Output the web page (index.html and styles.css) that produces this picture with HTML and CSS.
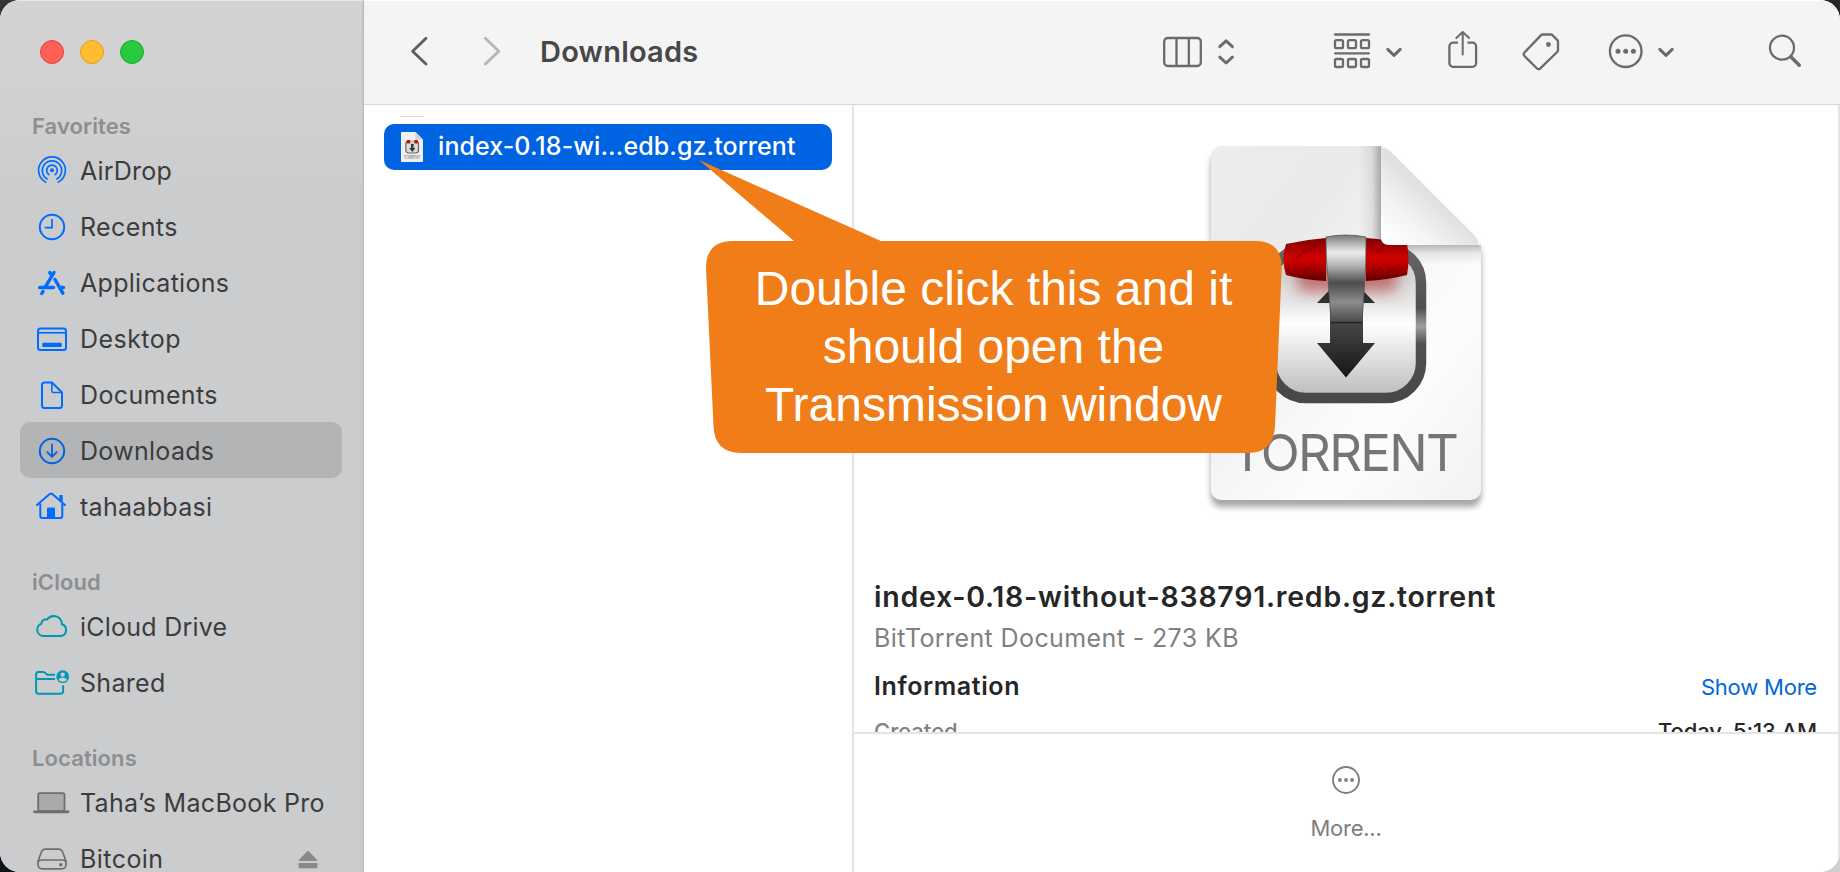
FILE: index.html
```html
<!DOCTYPE html>
<html lang="en">
<head>
<meta charset="utf-8">
<title>Downloads</title>
<link rel="stylesheet" href="styles.css">
</head>
<body>
<div class="window">
  <aside class="sidebar">
    <div class="lights"><i class="light red"></i><i class="light yellow"></i><i class="light green"></i></div>
    <h2 class="group first"><span class="t t-fav">Favorites</span></h2>
    <div class="row">
      <svg class="ico blue" viewBox="0 0 40 32"><circle cx="20" cy="16.300" r="2" fill="currentColor" stroke="none"/><g stroke-width="1.7"><path d="M17.500 21A5.300 5.300 0 1 1 22.500 21"/><path d="M15.700 25.200A9.700 9.700 0 1 1 24.300 25.200" /><path d="M14.300 28.400A13.400 13.400 0 1 1 25.700 28.400"/></g></svg>
      <span class="t t-air">AirDrop</span></div>
    <div class="row">
      <svg class="ico blue" viewBox="0 0 40 32"><circle cx="20" cy="17" r="12.200"/><path d="M20 9v8.700h-7.300" stroke-width="1.700"/></svg>
      <span class="t t-rec">Recents</span></div>
    <div class="row">
      <svg class="ico blue" viewBox="0 0 40 32"><g stroke-width="3.400" stroke-linecap="round"><path d="M17.800 6.500l2 3.200M22 6.500L13.500 20.700"/><path d="M23 13.500L30.800 27.200"/><path d="M7.700 21.500h13.800M28.500 21.500h3"/><path d="M11 25.500l-1.200 2"/></g></svg>
      <span class="t t-app">Applications</span></div>
    <div class="row">
      <svg class="ico blue" viewBox="0 0 40 32"><rect x="6" y="6.500" width="28" height="21.500" rx="2.500"/><path d="M6 10.800h28" stroke-width="1.700"/><rect x="10.300" y="20.700" width="19.400" height="4.300" rx="1" fill="currentColor" stroke="none"/></svg>
      <span class="t t-desk">Desktop</span></div>
    <div class="row">
      <svg class="ico blue" viewBox="0 0 40 32"><path d="M12.500 4.500H20L30 14.500V27.500a2.500 2.500 0 0 1-2.500 2.500h-15A2.500 2.500 0 0 1 10 27.500V7a2.500 2.500 0 0 1 2.500-2.500z"/><path d="M19.800 4.800V13a1.500 1.500 0 0 0 1.500 1.500h8.400" stroke-width="1.600"/></svg>
      <span class="t t-doc">Documents</span></div>
    <div class="row active">
      <svg class="ico blue dk" viewBox="0 0 40 32"><circle cx="20" cy="17" r="12.200"/><path d="M20 10.500v12M15.300 18.200l4.700 4.600 4.700-4.600" stroke-linecap="round" stroke-linejoin="round" stroke-width="1.800"/></svg>
      <span class="t t-down">Downloads</span></div>
    <div class="row">
      <svg class="ico blue" viewBox="0 0 40 32"><path d="M5 15L17.700 4a2 2 0 0 1 2.600 0L33 15" stroke-linecap="round"/><path d="M8.300 13.500V26a2 2 0 0 0 2 2h18a2 2 0 0 0 2-2V13.500"/><path d="M29 5v6.500" stroke-width="3.400"/><path d="M15 28v-9.500a1 1 0 0 1 1-1h6a1 1 0 0 1 1 1V28z" fill="currentColor" stroke="none"/></svg>
      <span class="t t-taha">tahaabbasi</span></div>
    <h2 class="group"><span class="t t-icl">iCloud</span></h2>
    <div class="row">
      <svg class="ico teal" viewBox="0 0 40 32"><path d="M11.500 26a6.300 6.300 0 0 1-2.200-12.200c.3-3.300 3-5 5.800-4.300C18.500 4.600 29 4.300 29.900 14.200A6.100 6.100 0 0 1 29 26z"/></svg>
      <span class="t t-idr">iCloud Drive</span></div>
    <div class="row">
      <svg class="ico teal" viewBox="0 0 40 32"><path d="M23 8.800h-7.500l-3-2.300a2 2 0 0 0-1.200-.4H6.500a2.400 2.400 0 0 0-2.400 2.400v16.800a2.400 2.400 0 0 0 2.400 2.400h22.200a2.400 2.400 0 0 0 2.400-2.400V19.200M4.100 13H23"/><circle cx="30.700" cy="10.700" r="6.400" fill="currentColor" stroke="none"/><circle cx="30.700" cy="8.600" r="2.200" fill="#cbccce" stroke="none"/><path d="M26.600 14.300c.6-3.600 7.600-3.600 8.200 0-2 1.800-6.200 1.800-8.200 0z" fill="#cbccce" stroke="none"/></svg>
      <span class="t t-shr">Shared</span></div>
    <h2 class="group"><span class="t t-loc">Locations</span></h2>
    <div class="row">
      <svg class="ico gray" viewBox="0 0 40 32"><rect x="6.200" y="7.200" width="26.300" height="18" rx="1.800" fill="#a9aaab" stroke-width="1.800"/><path d="M1.300 24.500h36v1.200a1.500 1.500 0 0 1-1.500 1.500H2.800a1.500 1.500 0 0 1-1.500-1.500z" fill="currentColor" stroke="none"/></svg>
      <span class="t t-mac">Taha’s MacBook Pro</span></div>
    <div class="row">
      <svg class="ico gray" viewBox="0 0 40 32"><path d="M9.700 9.300A3.800 3.800 0 0 1 13.200 7.100h13.600a3.800 3.800 0 0 1 3.500 2.200L33.600 18a6 6 0 0 1 .4 2.300v2.500a4 4 0 0 1-4 4H10a4 4 0 0 1-4-4v-2.500A6 6 0 0 1 6.400 18z" stroke-width="1.700"/><path d="M6.400 19.700C7 18.500 8 18 9.500 18h21c1.500 0 2.500.5 3.100 1.700" stroke-width="1.700"/><circle cx="28.800" cy="22.700" r="1.700" fill="currentColor" stroke="none"/></svg>
      <span class="t t-bit">Bitcoin</span>
      <svg class="eject" viewBox="0 0 20 20"><path d="M9.200 2.300a1.100 1.100 0 0 1 1.600 0l8 8.500c.5.600.3 1.200-.6 1.200H1.800c-.9 0-1.100-.600-.6-1.200z"/><rect x=".500" y="14" width="19" height="5.200" rx="1.300"/></svg>
    </div>
  </aside>
  <main class="main">
    <header class="toolbar">
      <svg class="tb back" viewBox="409 0 20 104"><path d="M426 38.300L412.600 51.200 426 64"/></svg>
      <svg class="tb fwd" viewBox="482 0 20 104"><path d="M485.300 38.300L498.800 51.200 485.300 64"/></svg>
      <h1 class="title"><span class="t t-title">Downloads</span></h1>
      <svg class="tb cols" viewBox="1160 0 80 104"><rect x="1164.200" y="38" width="36.600" height="28" rx="3.500"/><path d="M1176.500 38v28M1188.800 38v28"/><path class="chev" d="M1219.800 46.700l6.300-5.800 6.300 5.800M1219.800 57.200l6.300 5.800 6.300-5.800"/></svg>
      <svg class="tb grp" viewBox="1330 0 76 104"><path d="M1335 34.500h34M1335 53.300h34" stroke-linecap="round"/><rect x="1335" y="40.200" width="8" height="8" rx="1.500"/><rect x="1348" y="40.200" width="8" height="8" rx="1.500"/><rect x="1361" y="40.200" width="8" height="8" rx="1.500"/><rect x="1335" y="59" width="8" height="8" rx="1.500"/><rect x="1348" y="59" width="8" height="8" rx="1.500"/><rect x="1361" y="59" width="8" height="8" rx="1.500"/><path class="chev" d="M1387.800 49.300l6.200 6 6.200-6"/></svg>
      <svg class="tb share" viewBox="1444 0 36 104"><path d="M1458 42.700h-5a3.600 3.600 0 0 0-3.600 3.600v16.900a3.600 3.600 0 0 0 3.600 3.600h19.500a3.600 3.600 0 0 0 3.600-3.600V46.300a3.600 3.600 0 0 0-3.600-3.600h-5"/><path d="M1462.700 54.500V32.500M1456.300 38l6.400-6 6.400 6" stroke-width="2" stroke-linecap="round"/></svg>
      <svg class="tb tag" viewBox="1518 0 46 104"><path d="M1542.500 34.500h8.500a2 2 0 0 1 1.400.6l5 5a2 2 0 0 1 .6 1.400v8.800a2 2 0 0 1-.6 1.400L1540.300 68.300a2.500 2.500 0 0 1-3.500 0L1524.500 56a2.500 2.500 0 0 1 0-3.500l16.600-17.400a2 2 0 0 1 1.400-.6z"/><circle cx="1548.400" cy="44.500" r="2.400" class="dot"/></svg>
      <svg class="tb more" viewBox="1606 0 72 104"><circle cx="1625.700" cy="51.200" r="15.800"/><g class="dot"><circle cx="1618" cy="51.200" r="2.500"/><circle cx="1625.700" cy="51.200" r="2.500"/><circle cx="1633.400" cy="51.200" r="2.500"/></g><path class="chev" d="M1659.800 49.300l6.200 6 6.200-6"/></svg>
      <svg class="tb find" viewBox="1766 0 38 104"><circle cx="1782" cy="47.700" r="12"/><path d="M1791.300 57.200l8 8" stroke-width="3.400" stroke-linecap="round"/></svg>
    </header>
    <div class="content">
      <section class="column">
        <i class="sliver"></i>
        <div class="file">
          <svg class="mini" viewBox="0 0 22 30"><path d="M0 1a1 1 0 0 1 1-1h13.500L22 7.500V29a1 1 0 0 1-1 1H1a1 1 0 0 1-1-1z" fill="#f0f0f1"/><path d="M14.500 0v7.500H22z" fill="#cfd1d4"/><rect x="4.800" y="9" width="12.700" height="12" rx="3" fill="#dcdcdc" stroke="#666" stroke-width="1.200"/><rect x="5.600" y="8" width="3.800" height="3.600" rx="1" fill="#c01018"/><rect x="13.200" y="8" width="3.800" height="3.600" rx="1" fill="#c01018"/><path d="M9.400 8h3.800v4H9.400z" fill="#ccc"/><path d="M9.900 12h2.800l-.2 4h2l-3.200 4-3.200-4h2z" fill="#38383a"/><text x="2.500" y="27" textLength="17">TORRENT</text></svg>
          <span class="t t-file">index-0.18-wi...edb.gz.torrent</span>
        </div>
      </section>
      <section class="preview">
        <div class="details">
          <svg class="art" viewBox="1196 130 300 410">
            <defs>
              <linearGradient id="paper" x1="0" y1="0" x2="1" y2="1"><stop offset="0" stop-color="#ededed"/><stop offset=".28" stop-color="#eaeaea"/><stop offset=".5" stop-color="#f6f6f6"/><stop offset=".7" stop-color="#fdfdfd"/><stop offset="1" stop-color="#f2f2f2"/></linearGradient>
              <linearGradient id="fold" gradientUnits="userSpaceOnUse" x1="1386" y1="240" x2="1429" y2="193"><stop offset="0" stop-color="#fff"/><stop offset=".5" stop-color="#f3f3f3"/><stop offset="1" stop-color="#e0e0e0"/></linearGradient>
              <linearGradient id="shl" x1="0" x2="1" y1="0" y2="0"><stop offset="0" stop-color="#000" stop-opacity="0"/><stop offset=".6" stop-color="#000" stop-opacity=".08"/><stop offset="1" stop-color="#000" stop-opacity=".3"/></linearGradient>
              <linearGradient id="shb" x1="0" x2="0" y1="0" y2="1"><stop offset="0" stop-color="#000" stop-opacity=".26"/><stop offset=".4" stop-color="#000" stop-opacity=".08"/><stop offset="1" stop-color="#000" stop-opacity="0"/></linearGradient>
              <linearGradient id="face" x1="0" x2="0" y1="0" y2="1"><stop offset="0" stop-color="#c4c4c4"/><stop offset=".35" stop-color="#e4e4e4"/><stop offset=".5" stop-color="#fff"/><stop offset=".72" stop-color="#e0e0e0"/><stop offset="1" stop-color="#b8b8b8"/></linearGradient>
              <linearGradient id="rim" x1="0" x2="0" y1="0" y2="1"><stop offset="0" stop-color="#666"/><stop offset=".4" stop-color="#505050"/><stop offset=".52" stop-color="#a0a0a0"/><stop offset=".64" stop-color="#505050"/><stop offset="1" stop-color="#484848"/></linearGradient>
              <linearGradient id="red" x1="0" x2="0" y1="0" y2="1"><stop offset="0" stop-color="#7d0000"/><stop offset=".45" stop-color="#d00000"/><stop offset=".65" stop-color="#b80000"/><stop offset="1" stop-color="#5c0000"/></linearGradient>
              <linearGradient id="band" x1="0" x2="0" y1="0" y2="1"><stop offset="0" stop-color="#777"/><stop offset=".1" stop-color="#b5b5b5"/><stop offset=".2" stop-color="#ececec"/><stop offset=".36" stop-color="#b0b0b0"/><stop offset=".55" stop-color="#4c4c4c"/><stop offset=".77" stop-color="#8c8c8c"/><stop offset="1" stop-color="#4a4a4a"/></linearGradient>
              <linearGradient id="arrow" x1="0" x2="0" y1="0" y2="1"><stop offset="0" stop-color="#1a1a1a"/><stop offset=".5" stop-color="#444"/><stop offset="1" stop-color="#161616"/></linearGradient>
              <filter id="soft" x="-20%" y="-20%" width="140%" height="140%"><feGaussianBlur stdDeviation="3"/></filter>
              <filter id="glow" x="-30%" y="-80%" width="160%" height="260%"><feGaussianBlur stdDeviation="7"/></filter>
              <clipPath id="sheet"><path d="M1221 146H1378q7 0 12 5l84 84q7 6 7 14V490a10 10 0 0 1-10 10H1221a10 10 0 0 1-10-10V156a10 10 0 0 1 10-10z"/></clipPath>
            </defs>
            <path d="M1221 153H1378q7 0 12 5l84 84q7 6 7 14V497a10 10 0 0 1-10 10H1221a10 10 0 0 1-10-10V163a10 10 0 0 1 10-10z" fill="#000" opacity=".35" filter="url(#soft)"/>
            <path d="M1221 146H1378q7 0 12 5l84 84q7 6 7 14V490a10 10 0 0 1-10 10H1221a10 10 0 0 1-10-10V156a10 10 0 0 1 10-10z" fill="url(#paper)"/>
            <g clip-path="url(#sheet)">
              <rect x="1359" y="146" width="22" height="100" fill="url(#shl)"/>
              <rect x="1386" y="245" width="96" height="20" fill="url(#shb)"/>
            </g>
            <rect x="1268" y="248" width="156" height="152" rx="36" fill="url(#face)"/>
            <rect x="1271" y="248" width="150" height="150" rx="35" fill="none" stroke="url(#rim)" stroke-width="10.500"/>
            <rect x="1296" y="266" width="102" height="26" rx="10" fill="#b03030" opacity=".6" filter="url(#glow)"/>
            <path d="M1346 273l29 30h-12v40h12l-29 34.500-29-34.500h13v-40h-13z" fill="url(#arrow)"/>
            <path d="M1286 244q20-4.500 40-6v43q-22-1-40-6-5-15 0-31zM1366 238q22 1.500 41 6 3 15 0 31-19 5-41 6z" fill="url(#red)"/>
            <path d="M1294 259q8-3 11-10M1304 273q4-6 9-8M1317 243q-2 6-8 6M1375 253q7-2 9-8M1388 272q5-4 12-7M1373 269q5 3 8-2" fill="none" stroke="#3b0000" stroke-opacity=".25" stroke-width="1.600"/>
            <path d="M1326 237q20-4 40 0 0 24-1 41l-3 44h-31l-3-44q-2-17-2-41z" fill="url(#band)" stroke="#555" stroke-width=".8"/>
            <path d="M1331 322.500h31" stroke="#222" stroke-width="1.500"/>
            <path d="M1381 148q5 0 9 3l84 84q4 4 5 10h-90q-8 0-8-8z" fill="url(#fold)"/>
            <text class="torrent" x="1231" y="470.500" textLength="228">TORRENT</text>
          </svg>
          <h2 class="name"><span class="t t-name">index-0.18-without-838791.redb.gz.torrent</span></h2>
          <p class="kind"><span class="t t-kind">BitTorrent Document - 273 KB</span></p>
          <div class="line info"><span class="t t-info">Information</span><span class="t t-show">Show More</span></div>
          <div class="line created"><span class="t t-cre">Created</span><span class="t t-tod">Today, 5:13 AM</span></div>
        </div>
        <footer class="actions">
          <svg class="dots" viewBox="0 0 30 30"><circle cx="15" cy="15" r="13"/><g class="dot"><circle cx="8.900" cy="15" r="1.900"/><circle cx="15" cy="15" r="1.900"/><circle cx="21.100" cy="15" r="1.900"/></g></svg>
          <span class="t t-more">More...</span>
        </footer>
      </section>
    </div>
  </main>
</div>
<div class="callout">
  <svg class="bubble" viewBox="699 160 584 294"><path d="M699 160L881 241H1255Q1282 241 1281.700 268L1275 426Q1273.500 453 1247 453H741Q714.500 453 713.500 426L706 268Q706 241 733 241H794z"/></svg>
  <p class="note">Double click this and it<br>should open the<br>Transmission window</p>
</div>
</body>
</html>
```
FILE: styles.css
```css
* { box-sizing: border-box; margin: 0; padding: 0; }
body {
  width: 1840px; height: 872px; overflow: hidden; position: relative;
  font-family: Inter, "Liberation Sans", sans-serif;
  background: linear-gradient(to right, transparent 50%, #282828 50%) top / 100% 50% no-repeat,
    linear-gradient(to right, #10131a 50%, #cfcfcf 50%) bottom / 100% 50% no-repeat, #353535;
}
svg { display: block; flex: none; overflow: visible; }
.t { white-space: nowrap; }
.window { display: flex; width: 1840px; height: 872px; border-radius: 20px; overflow: hidden; background: #fff; }

.sidebar {
  width: 364px; flex: none; overflow: hidden;
  background: linear-gradient(#d3d3d3, #d1d1d1 90px, #cbccce 200px, #cbccce);
  border-right: 1px solid #bcbdbe; box-shadow: inset 0 1px 0 #e8e8e8, inset -1px 0 0 #c4c5c6;
}
.lights { display: flex; gap: 16px; padding: 40px 0 0 40px; height: 112px; }
.light { width: 24px; height: 24px; border-radius: 50%; }
.red { background: #ff5f57; border: 1px solid #e2453e; }
.yellow { background: #febc2e; border: 1px solid #dfa023; }
.green { background: #28c840; border: 1px solid #1dad2c; }
.group { height: 64px; padding: 34px 0 0 32px; font-size: 22px; line-height: 28px; font-weight: 600; color: #8d8e90; letter-spacing: .1px; }
.group.first { height: 30px; padding-top: 0; }
.row { height: 56px; margin: 0 21px 0 20px; padding-left: 12px; display: flex; align-items: center; font-size: 25px; line-height: 54px; color: #3c3c3d; letter-spacing: .3px; }
.row .t { padding-top: 2px; margin-left: 8px; }
.row .t-air { letter-spacing: .2px; }
.row .t-rec, .row .t-doc { letter-spacing: .38px; }
.row .t-desk, .row .t-bit { letter-spacing: .45px; }
.row .t-idr { letter-spacing: .24px; }
.row.active { background: #b2b4b5; border-radius: 10px; }
.ico { width: 40px; height: 32px; fill: none; stroke: currentColor; stroke-width: 2; }
.blue { color: #006cff; }
.dk { color: #0061e6; }
.teal { color: #0099b4; }
.gray { color: #6c6d6e; }
.eject { width: 20px; height: 20px; fill: #88898a; margin: 2px 24px 0 auto; }

.main { flex: 1; display: flex; flex-direction: column; min-width: 0; }
.toolbar { height: 105px; display: flex; background: #f4f4f4; border-bottom: 1px solid #d9d9d9; box-shadow: inset 0 1px 0 #fff; padding-left: 45px; }
.tb { height: 104px; fill: none; stroke: #6b6b6b; stroke-width: 2.300; stroke-linejoin: round; }
.chev { stroke-width: 3; stroke-linecap: round; }
.dot { fill: currentColor; stroke: none; }
.toolbar .dot { fill: #6b6b6b; }
.back { width: 20px; stroke: #5c5c5c; stroke-width: 2.800; stroke-linecap: round; }
.fwd { width: 20px; margin-left: 53px; stroke: #b5b5b5; stroke-width: 2.800; stroke-linecap: round; }
.title { width: 658px; padding-left: 38px; font-size: 29px; line-height: 103px; font-weight: 600; color: #474747; letter-spacing: .22px; }
.cols { width: 80px; }
.grp { width: 76px; margin-left: 90px; }
.share { width: 36px; margin-left: 38px; }
.tag { width: 46px; margin-left: 38px; }
.more { width: 72px; margin-left: 42px; }
.find { width: 38px; margin-left: 88px; }

.content { flex: 1; display: flex; min-height: 0; }
.column { width: 490px; flex: none; border-right: 2px solid #e4e4e4; padding: 11px 20px 0; }
.sliver { display: block; width: 24px; height: 1px; margin: 0 0 7px 16px; background: #dcdcdc; }
.file { height: 46px; border-radius: 10px; background: #0063e1; color: #fff; display: flex; align-items: center; padding-left: 17px; font-size: 25px; font-weight: 500; line-height: 44px; letter-spacing: .08px; }
.t-file { padding-bottom: 2px; }
.mini { width: 22px; height: 30px; margin-right: 15px; }
.mini text { font-size: 4.500px; font-weight: 400; fill: #888; letter-spacing: 0; }
.preview { flex: 1; display: flex; flex-direction: column; border-right: 2px solid #e4e4e4; }
.details { height: 627px; overflow: hidden; padding: 25px 21px 0 20px; }
.art { width: 300px; height: 410px; margin: 0 auto; }
.torrent { font-size: 51px; fill: #757575; font-weight: 400; }
.name { font-size: 28.500px; line-height: 40px; font-weight: 600; color: #262626; margin-top: 37px; letter-spacing: .74px; }
.kind { font-size: 25px; line-height: 40px; color: #808080; margin-top: 1px; letter-spacing: .39px; }
.line { display: flex; justify-content: space-between; align-items: baseline; line-height: 40px; }
.info { margin-top: 8px; }
.t-info { font-size: 25px; font-weight: 600; color: #262626; letter-spacing: .6px; }
.t-show { font-size: 22px; color: #0068da; letter-spacing: -.2px; }
.created { font-size: 22px; margin-top: 4px; font-weight: 500; color: #808080; }
.t-tod { color: #262626; letter-spacing: -.1px; }
.actions { flex: 1; border-top: 2px solid #e4e4e4; display: flex; flex-direction: column; align-items: center; padding-top: 31px; color: #7e7e7e; font-size: 22px; line-height: 30px; letter-spacing: -.25px; }
.dots { width: 30px; height: 30px; fill: none; stroke: currentColor; stroke-width: 1.900; margin-bottom: 18px; }

.callout { position: absolute; left: 699px; top: 160px; width: 584px; height: 294px; }
.bubble { position: absolute; inset: 0; width: 584px; height: 294px; fill: #f07d18; }
.note { position: relative; padding: 100px 0 0 5px; text-align: center; font-family: "Liberation Sans", Arial, sans-serif; font-size: 48px; line-height: 58px; color: #fff; }
```
